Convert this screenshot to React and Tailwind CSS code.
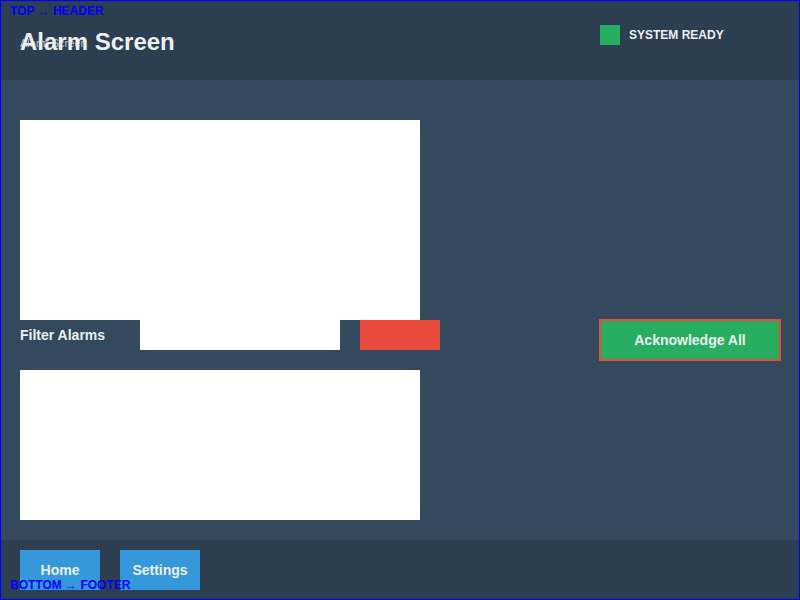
import React from 'react';

const App = () => {
  return (
    <div className="relative w-[800px] h-[600px] overflow-hidden flex flex-col text-[#ecf0f1]" style={{ fontFamily: '"Liberation Sans", Arial, sans-serif' }}>
      {/* header */}
      <div className="relative h-[80px] bg-[#2c3e50] flex items-start px-[20px]">
        <span className="absolute left-[20px] top-[35px] text-[11px] text-[#bdc3c7]">Alarm Screen</span>
        <h1 className="relative mt-[27px] text-[24px] leading-[30px] font-bold">Alarm Screen</h1>
        <div className="ml-auto w-[180px] mt-[25px] flex items-center">
          <div className="w-[20px] h-[20px] bg-[#27ae60]" />
          <span className="ml-[9px] text-[12px] font-bold">SYSTEM READY</span>
        </div>
      </div>

      {/* main */}
      <div className="flex-1 bg-[#34495e] px-[20px] pt-[40px]">
        <div className="w-[400px] h-[200px] bg-white" />
        <div className="h-[50px] flex items-start">
          <div className="w-[120px] h-[30px] flex items-center text-[14px] font-bold">Filter Alarms</div>
          <div className="w-[200px] h-[30px] bg-white" />
          <div className="ml-[20px] w-[80px] h-[30px] bg-[#e74c3c]" />
          <button className="ml-auto mr-[-1px] mt-[-1px] w-[182px] h-[42px] bg-[#27ae60] border-2 border-[#e74c3c] text-[14px] font-bold text-[#ecf0f1]">
            Acknowledge All
          </button>
        </div>
        <div className="w-[400px] h-[150px] bg-white" />
      </div>

      {/* footer */}
      <div className="h-[60px] bg-[#2c3e50] flex items-start gap-[20px] px-[20px] pt-[10px]">
        <button className="w-[80px] h-[40px] bg-[#3498db] text-[14px] font-bold text-[#ecf0f1]">Home</button>
        <button className="w-[80px] h-[40px] bg-[#3498db] text-[14px] font-bold text-[#ecf0f1]">Settings</button>
      </div>

      {/* annotations */}
      <span className="absolute left-[10px] top-[3px] text-[12px] leading-[16px] font-bold text-[#0000ff]">TOP → HEADER</span>
      <span className="absolute left-[10px] top-[577px] text-[12px] leading-[16px] font-bold text-[#0000ff]">BOTTOM → FOOTER</span>
      <div className="absolute inset-0 border border-[#0000ff] pointer-events-none" />
    </div>
  );
};

export default App;
